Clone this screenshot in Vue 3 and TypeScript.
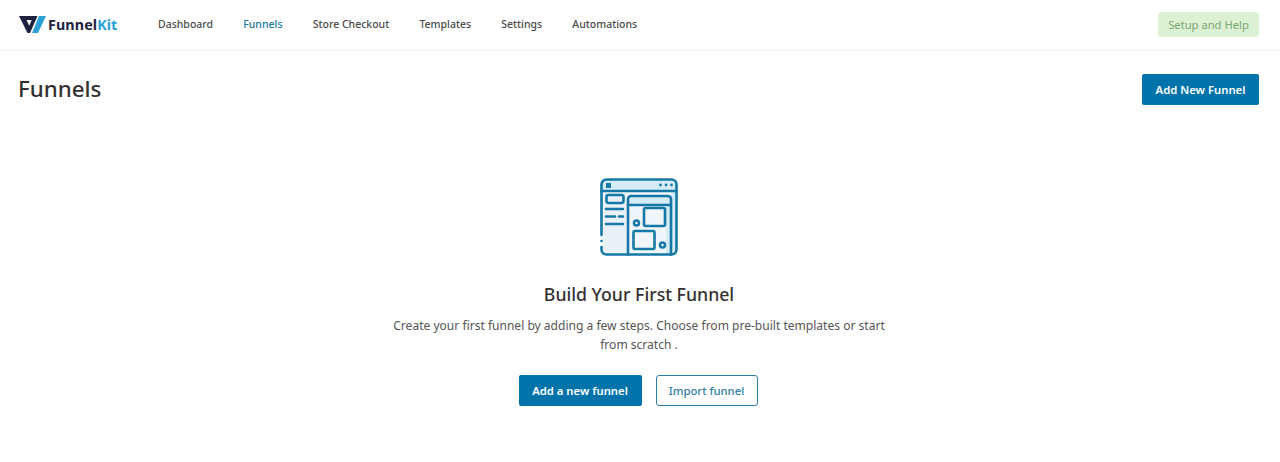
<script setup lang="ts">
const navItems: { label: string; active?: boolean }[] = [
  { label: 'Dashboard' },
  { label: 'Funnels', active: true },
  { label: 'Store Checkout' },
  { label: 'Templates' },
  { label: 'Settings' },
  { label: 'Automations' },
]
</script>

<template>
  <div class="page">
    <header class="topbar">
      <div class="logo">
        <svg class="logo-mark" width="27" height="17" viewBox="0 0 27 17">
          <path fill-rule="evenodd" d="M0 0H18.500L11 17H8.500ZM7.500 4L10.300 9.800L12.700 4Z" fill="#1d2140" />
          <path d="M20 0H27L19 17H13Z" fill="#2a9fd8" />
        </svg>
        <span class="logo-text">Funnel<span class="logo-kit">Kit</span></span>
      </div>
      <nav class="nav">
        <a v-for="item in navItems" :key="item.label" class="nav-item" :class="{ active: item.active }">{{ item.label }}</a>
      </nav>
      <button class="help">Setup and Help</button>
    </header>

    <div class="title-row">
      <h1 class="title">Funnels</h1>
      <button class="btn primary top-btn">Add New Funnel</button>
    </div>

    <main class="empty">
      <svg class="illustration" width="78" height="78" viewBox="0 0 78 78" fill="none">
        <rect x="1.500" y="1.500" width="75" height="75" rx="5" fill="#f1f6fa" />
        <path d="M1.500 13V6.500a5 5 0 0 1 5-5h65a5 5 0 0 1 5 5V13z" fill="#d5ecf6" />
        <path d="M28 21a3 3 0 0 1 3-3h37a3 3 0 0 1 3 3v6H28z" fill="#d5ecf6" />
        <path d="M66 27h5v49.500h-5zM71 13h5.500v63.500H71z" fill="#d5ecf6" />
        <rect x="4" y="15" width="22" height="60" fill="#e9f1f6" />
        <g stroke="#1578a6" stroke-width="2.600" stroke-linecap="round" stroke-linejoin="round">
          <path d="M1.500 57V6.500a5 5 0 0 1 5-5h65a5 5 0 0 1 5 5v65a5 5 0 0 1-5 5h-65a5 5 0 0 1-5-5V69" />
          <path d="M1.500 13h75" />
          <path d="M28 76.500V21a3 3 0 0 1 3-3h37a3 3 0 0 1 3 3v55.500" />
          <path d="M28 27h43" />
          <rect x="6.500" y="17" width="17" height="8" rx="2" />
          <path d="M6 31h17M6 38.500h9M19 38.500h4M6 46h17" />
          <rect x="44" y="30" width="21" height="18" rx="1.500" fill="#f1f6fa" />
          <rect x="33.500" y="53" width="21" height="18" rx="1.500" fill="#f1f6fa" />
          <circle cx="36.500" cy="45" r="2.500" />
          <circle cx="62.500" cy="67" r="2.500" />
        </g>
        <rect x="6" y="5" width="5" height="5" fill="#1578a6" />
        <circle cx="60.500" cy="7" r="1.400" fill="#1578a6" />
        <circle cx="66" cy="7" r="1.400" fill="#1578a6" />
        <circle cx="71.500" cy="7" r="1.400" fill="#1578a6" />
        <circle cx="1.500" cy="63" r="1.300" fill="#1578a6" />
      </svg>
      <h2 class="heading">Build Your First Funnel</h2>
      <p class="desc">Create your first funnel by adding a few steps. Choose from pre-built templates or start from scratch .</p>
      <div class="actions">
        <button class="btn primary">Add a new funnel</button>
        <button class="btn outline">Import funnel</button>
      </div>
    </main>
  </div>
</template>

<style>
html, body { margin: 0; background: #fff; }
</style>

<style scoped>
.page {
  width: 1280px;
  height: 462px;
  overflow: hidden;
  background: #fff;
  font-family: "Noto Sans", "Open Sans", sans-serif;
  color: #353030;
}
.topbar {
  height: 49px;
  box-sizing: border-box;
  padding: 0 21px 1px 19px;
  display: flex;
  align-items: center;
  box-shadow: 0 1px 4px rgba(0, 0, 0, 0.07);
}
.logo {
  display: flex;
  align-items: center;
  width: 139px;
}
.logo-mark { flex: none; margin-right: 2px; }
.logo-text {
  font-size: 14.300px;
  font-weight: 700;
  color: #1d2140;
  letter-spacing: 0.1px;
}
.logo-kit { color: #2a9fd8; }
.nav {
  display: flex;
  gap: 30.200px;
  flex: 1;
}
.nav-item {
  font-size: 10.500px;
  font-weight: 500;
  color: #4a4a4a;
}
.nav-item.active { color: #1a7aa5; }
.help {
  width: 101px;
  height: 25px;
  padding: 0;
  border: 0;
  border-radius: 4px;
  background: #dcf1d4;
  color: #7ba772;
  font: 400 11.200px "Noto Sans", sans-serif;
}
.title-row {
  display: flex;
  align-items: flex-start;
  justify-content: space-between;
  padding: 25px 21px 0 18px;
}
.title {
  margin: 0 0 4px;
  font-size: 22.300px;
  font-weight: 500;
  line-height: 30px;
}
.btn {
  box-sizing: border-box;
  height: 31px;
  padding: 0;
  border-radius: 2px;
  font: 600 11.300px "Noto Sans", sans-serif;
}
.primary {
  background: #0073aa;
  border: 0;
  color: #fff;
}
.top-btn { width: 117px; }
.empty {
  display: flex;
  flex-direction: column;
  align-items: center;
  padding: 70px 2px 0 0;
  box-sizing: border-box;
}
.illustration { display: block; }
.heading {
  margin: 26px 0 0;
  font-size: 17.700px;
  font-weight: 500;
  line-height: 24px;
}
.desc {
  width: 510px;
  margin: 10px 0 0;
  font-size: 12.050px;
  line-height: 19px;
  text-align: center;
  color: #555;
}
.actions {
  display: flex;
  gap: 14px;
  margin: 21px 2px 0 0;
}
.actions .primary { width: 123px; }
.outline {
  width: 102px;
  background: #fff;
  border: 1px solid #2a80a8;
  border-radius: 3px;
  color: #2f7fa5;
  font-weight: 500;
}
</style>
